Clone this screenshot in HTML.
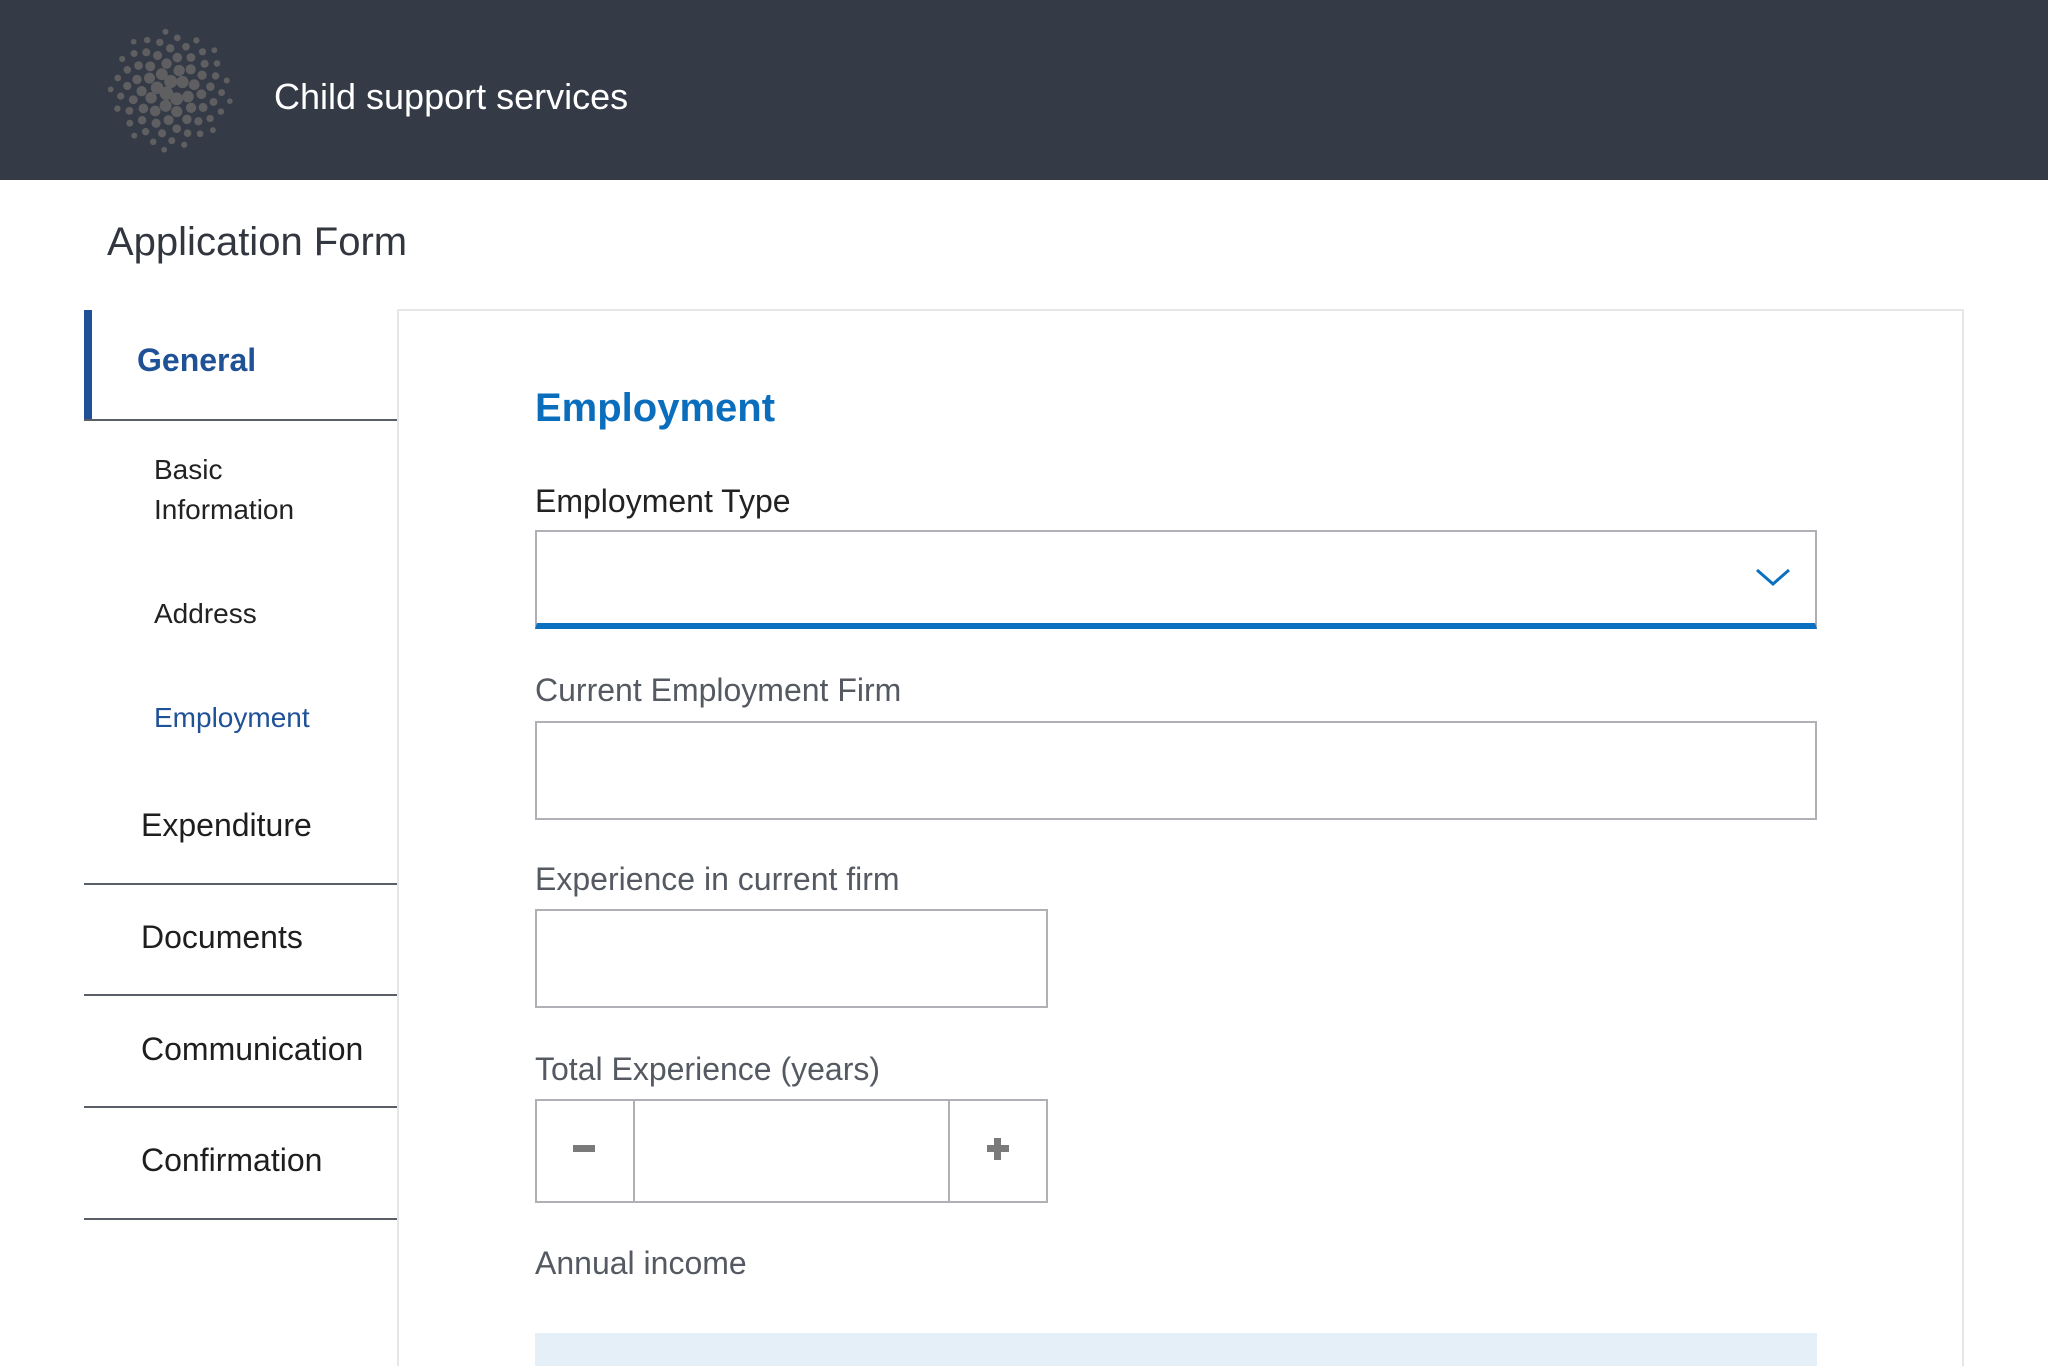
<!DOCTYPE html>
<html><head><meta charset="utf-8">
<style>
*{margin:0;padding:0;box-sizing:border-box}
html,body{width:2048px;height:1366px;overflow:hidden}
body{background:#fff;font-family:"Liberation Sans",Arial,sans-serif;position:relative}
.hdr{position:absolute;left:0;top:0;width:2048px;height:180px;background:#343a46}
.hdr .t{position:absolute;left:274px;top:77px;color:#fff;font-size:36px;line-height:40px}
.abs{position:absolute;white-space:nowrap}
.line{position:absolute;left:84px;width:313px;height:2px;background:#5a5e66}
.box{position:absolute;border:2px solid #b0b0b6;background:#fff}
.lbl{position:absolute;left:535px;font-size:32px;color:#555a62;line-height:34px}
</style></head><body>
<div class="hdr">
<svg id="logo" width="140" height="140" style="position:absolute;left:100px;top:20px" viewBox="0 0 140 140"></svg>
<div class="t">Child support services</div>
</div>
<div class="abs" style="left:107px;top:219px;font-size:40px;color:#32363e;line-height:46px">Application Form</div>

<div style="position:absolute;left:84px;top:310px;width:8px;height:110px;background:#1f5197"></div>
<div class="abs" style="left:137px;top:342px;font-size:32px;font-weight:bold;color:#1f5197;line-height:36px">General</div>
<div class="line" style="top:419px"></div>
<div class="abs" style="left:154px;top:450px;font-size:28px;color:#222;line-height:40px">Basic<br>Information</div>
<div class="abs" style="left:154px;top:598px;font-size:28px;color:#222;line-height:32px">Address</div>
<div class="abs" style="left:154px;top:702px;font-size:28px;color:#1f5197;line-height:32px">Employment</div>
<div class="abs" style="left:141px;top:807px;font-size:32px;color:#1e1e1e;line-height:36px">Expenditure</div>
<div class="line" style="top:883px"></div>
<div class="abs" style="left:141px;top:919px;font-size:32px;color:#1e1e1e;line-height:36px">Documents</div>
<div class="line" style="top:994px"></div>
<div class="abs" style="left:141px;top:1031px;font-size:32px;color:#1e1e1e;line-height:36px">Communication</div>
<div class="line" style="top:1106px"></div>
<div class="abs" style="left:141px;top:1142px;font-size:32px;color:#1e1e1e;line-height:36px">Confirmation</div>
<div class="line" style="top:1218px"></div>

<div style="position:absolute;left:397px;top:309px;width:1567px;height:1057px;border:2px solid #e6e6e6;border-bottom:none"></div>

<div class="abs" style="left:535px;top:385px;font-size:40px;font-weight:bold;color:#0a6ebd;line-height:46px">Employment</div>
<div class="lbl" style="top:484px;color:#222">Employment Type</div>
<div class="box" style="left:535px;top:530px;width:1282px;height:99px;border-bottom:6px solid #0a70c0"></div>
<svg style="position:absolute;left:1755px;top:567px" width="36" height="22" viewBox="0 0 36 22"><path d="M2 3 L18 17 L34 3" fill="none" stroke="#0a70c0" stroke-width="3"/></svg>

<div class="lbl" style="top:673px">Current Employment Firm</div>
<div class="box" style="left:535px;top:721px;width:1282px;height:99px"></div>

<div class="lbl" style="top:862px">Experience in current firm</div>
<div class="box" style="left:535px;top:909px;width:513px;height:99px"></div>

<div class="lbl" style="top:1052px">Total Experience (years)</div>
<div class="box" style="left:535px;top:1099px;width:513px;height:104px"></div>
<div style="position:absolute;left:633px;top:1100px;width:2px;height:102px;background:#b0b0b6"></div>
<div style="position:absolute;left:948px;top:1100px;width:2px;height:102px;background:#b0b0b6"></div>
<div style="position:absolute;left:573px;top:1145px;width:22px;height:7px;background:#7a7a7a"></div>
<div style="position:absolute;left:987px;top:1145px;width:22px;height:7px;background:#7a7a7a"></div>
<div style="position:absolute;left:994px;top:1138px;width:7px;height:22px;background:#7a7a7a"></div>

<div class="lbl" style="top:1246px">Annual income</div>
<div style="position:absolute;left:535px;top:1333px;width:1282px;height:33px;background:#e4eff8"></div>

<script>
var s=document.getElementById('logo'),h='';
var n=76,ga=Math.PI*(3-Math.sqrt(5));
for(var i=1;i<=n;i++){var r=61*Math.sqrt((i-0.5)/n);var a=i*ga;var x=70+r*Math.cos(a),y=70+r*Math.sin(a);
var rad=7.2-4.4*(r/61);h+='<circle cx="'+x.toFixed(1)+'" cy="'+y.toFixed(1)+'" r="'+rad.toFixed(2)+'" fill="#5f5f61"/>';}
s.innerHTML=h;
</script>
</body></html>
